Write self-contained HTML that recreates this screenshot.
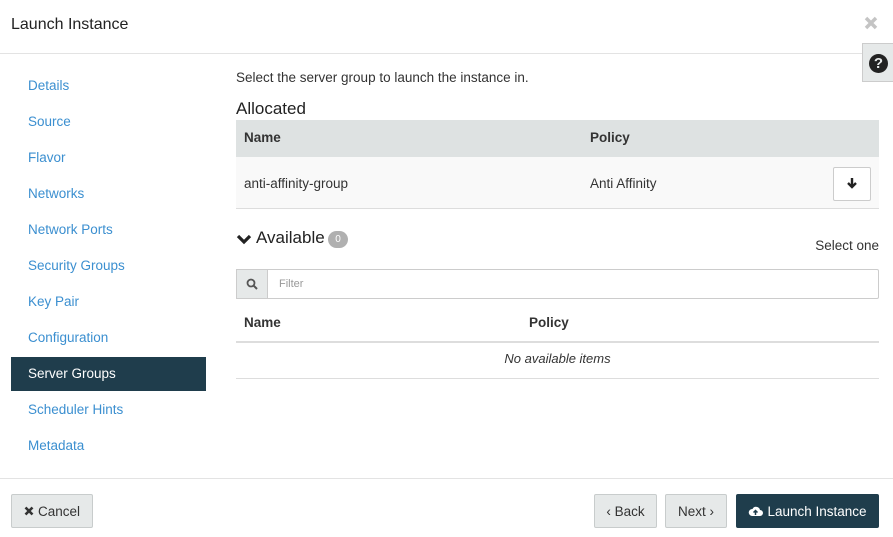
<!DOCTYPE html>
<html><head><meta charset="utf-8"><style>
*{box-sizing:border-box;margin:0;padding:0}
body{width:893px;height:537px;background:#fff;font-family:"Liberation Sans",sans-serif;font-size:13.5px;color:#333;position:relative;overflow:hidden}
.a{position:absolute;white-space:nowrap}
.nav{left:28px;color:#3b8fd0;font-size:13.5px}
.btn{position:absolute;top:494px;height:34px;border:1px solid #c8cccc;background:#e6e9e9;border-radius:2px;font-size:13.5px;color:#333;display:flex;align-items:center;justify-content:center}
</style></head><body>
<div class="a" style="left:11px;top:16px;font-size:16px;color:#222">Launch Instance</div>
<svg class="a" style="left:864px;top:16px" width="14" height="14" viewBox="0 0 14 14"><path d="M2 2L12 12M12 2L2 12" stroke="#c4c4c4" stroke-width="3.5"/></svg>
<div class="a" style="left:0;top:53px;width:893px;height:1px;background:#e3e3e3"></div>
<div class="a" style="left:862px;top:43px;width:31px;height:39px;background:#e6e9e9;border:1px solid #ccc;border-right:none"></div>
<div class="a" style="left:869px;top:54px;width:19px;height:19px;border-radius:50%;background:#222;color:#e6e9e9;font-weight:bold;font-size:15px;text-align:center;line-height:19px">?</div>

<div class="a nav" style="top:78px">Details</div>
<div class="a nav" style="top:114px">Source</div>
<div class="a nav" style="top:150px">Flavor</div>
<div class="a nav" style="top:186px">Networks</div>
<div class="a nav" style="top:222px">Network Ports</div>
<div class="a nav" style="top:258px">Security Groups</div>
<div class="a nav" style="top:294px">Key Pair</div>
<div class="a nav" style="top:330px">Configuration</div>
<div class="a" style="left:11px;top:357px;width:195px;height:34px;background:#1f3d4c"></div>
<div class="a nav" style="top:366px;color:#fff">Server Groups</div>
<div class="a nav" style="top:402px">Scheduler Hints</div>
<div class="a nav" style="top:438px">Metadata</div>

<div class="a" style="left:236px;top:70px">Select the server group to launch the instance in.</div>
<div class="a" style="left:236px;top:99px;font-size:17px;color:#222">Allocated</div>
<div class="a" style="left:236px;top:120px;width:643px;height:37px;background:#dee2e2"></div>
<div class="a" style="left:244px;top:130px;font-weight:bold">Name</div>
<div class="a" style="left:590px;top:130px;font-weight:bold">Policy</div>
<div class="a" style="left:236px;top:157px;width:643px;height:52px;background:#f9f9f9;border-bottom:1px solid #ddd"></div>
<div class="a" style="left:244px;top:176px">anti-affinity-group</div>
<div class="a" style="left:590px;top:176px">Anti Affinity</div>
<div class="a" style="left:833px;top:167px;width:38px;height:34px;background:#fff;border:1px solid #ccc;border-radius:2px"></div>
<svg class="a" style="left:846px;top:177px" width="12" height="12" viewBox="0 0 12 12"><path d="M6 1V10M2 6L6 10L10 6" stroke="#222" stroke-width="2.4" fill="none"/></svg>

<svg class="a" style="left:236px;top:234px" width="16" height="11" viewBox="0 0 16 11"><path d="M2 2L8 8L14 2" stroke="#222" stroke-width="3.2" fill="none"/></svg>
<div class="a" style="left:256px;top:228px;font-size:17px;color:#222">Available</div>
<div class="a" style="left:328px;top:231px;width:20px;height:17px;background:#b0b0b0;color:#fff;font-size:10px;border-radius:9px;text-align:center;line-height:17px">0</div>
<div class="a" style="right:14px;top:238px">Select one</div>
<div class="a" style="left:236px;top:269px;width:643px;height:30px;border:1px solid #ccc;border-radius:2px"></div>
<div class="a" style="left:236px;top:269px;width:32px;height:30px;background:#e6e9e9;border:1px solid #ccc"></div>
<svg class="a" style="left:246px;top:278px" width="12" height="12" viewBox="0 0 12 12"><circle cx="5" cy="5" r="3.5" stroke="#555" stroke-width="1.8" fill="none"/><path d="M7.5 7.5L11 11" stroke="#555" stroke-width="2"/></svg>
<div class="a" style="left:279px;top:278px;font-size:11px;color:#999">Filter</div>
<div class="a" style="left:244px;top:315px;font-weight:bold">Name</div>
<div class="a" style="left:529px;top:315px;font-weight:bold">Policy</div>
<div class="a" style="left:236px;top:341px;width:643px;height:2px;background:#ddd"></div>
<div class="a" style="left:236px;top:351px;width:643px;text-align:center;font-style:italic;font-size:13px">No available items</div>
<div class="a" style="left:236px;top:378px;width:643px;height:1px;background:#ddd"></div>

<div class="a" style="left:0;top:478px;width:893px;height:1px;background:#e3e3e3"></div>
<div class="btn" style="left:11px;width:82px"><svg width="10" height="10" viewBox="0 0 10 10" style="margin-right:4px"><path d="M1.5 1.5L8.5 8.5M8.5 1.5L1.5 8.5" stroke="#333" stroke-width="2.6"/></svg>Cancel</div>
<div class="btn" style="left:594px;width:63px">‹ Back</div>
<div class="btn" style="left:665px;width:62px">Next ›</div>
<div class="btn" style="left:736px;width:143px;background:#1f3d4c;border-color:#1f3d4c;color:#fff"><svg width="15" height="12" viewBox="0 0 15 12" style="margin-right:4px"><path d="M4 11H12A3 3 0 0 0 12 5A4 4 0 0 0 4.5 4A3.5 3.5 0 0 0 4 11Z" fill="#fff"/><path d="M7.5 10V6M5.5 7.5L7.5 5.5L9.5 7.5" stroke="#1f3d4c" stroke-width="1.5" fill="none"/></svg>Launch Instance</div>
</body></html>
